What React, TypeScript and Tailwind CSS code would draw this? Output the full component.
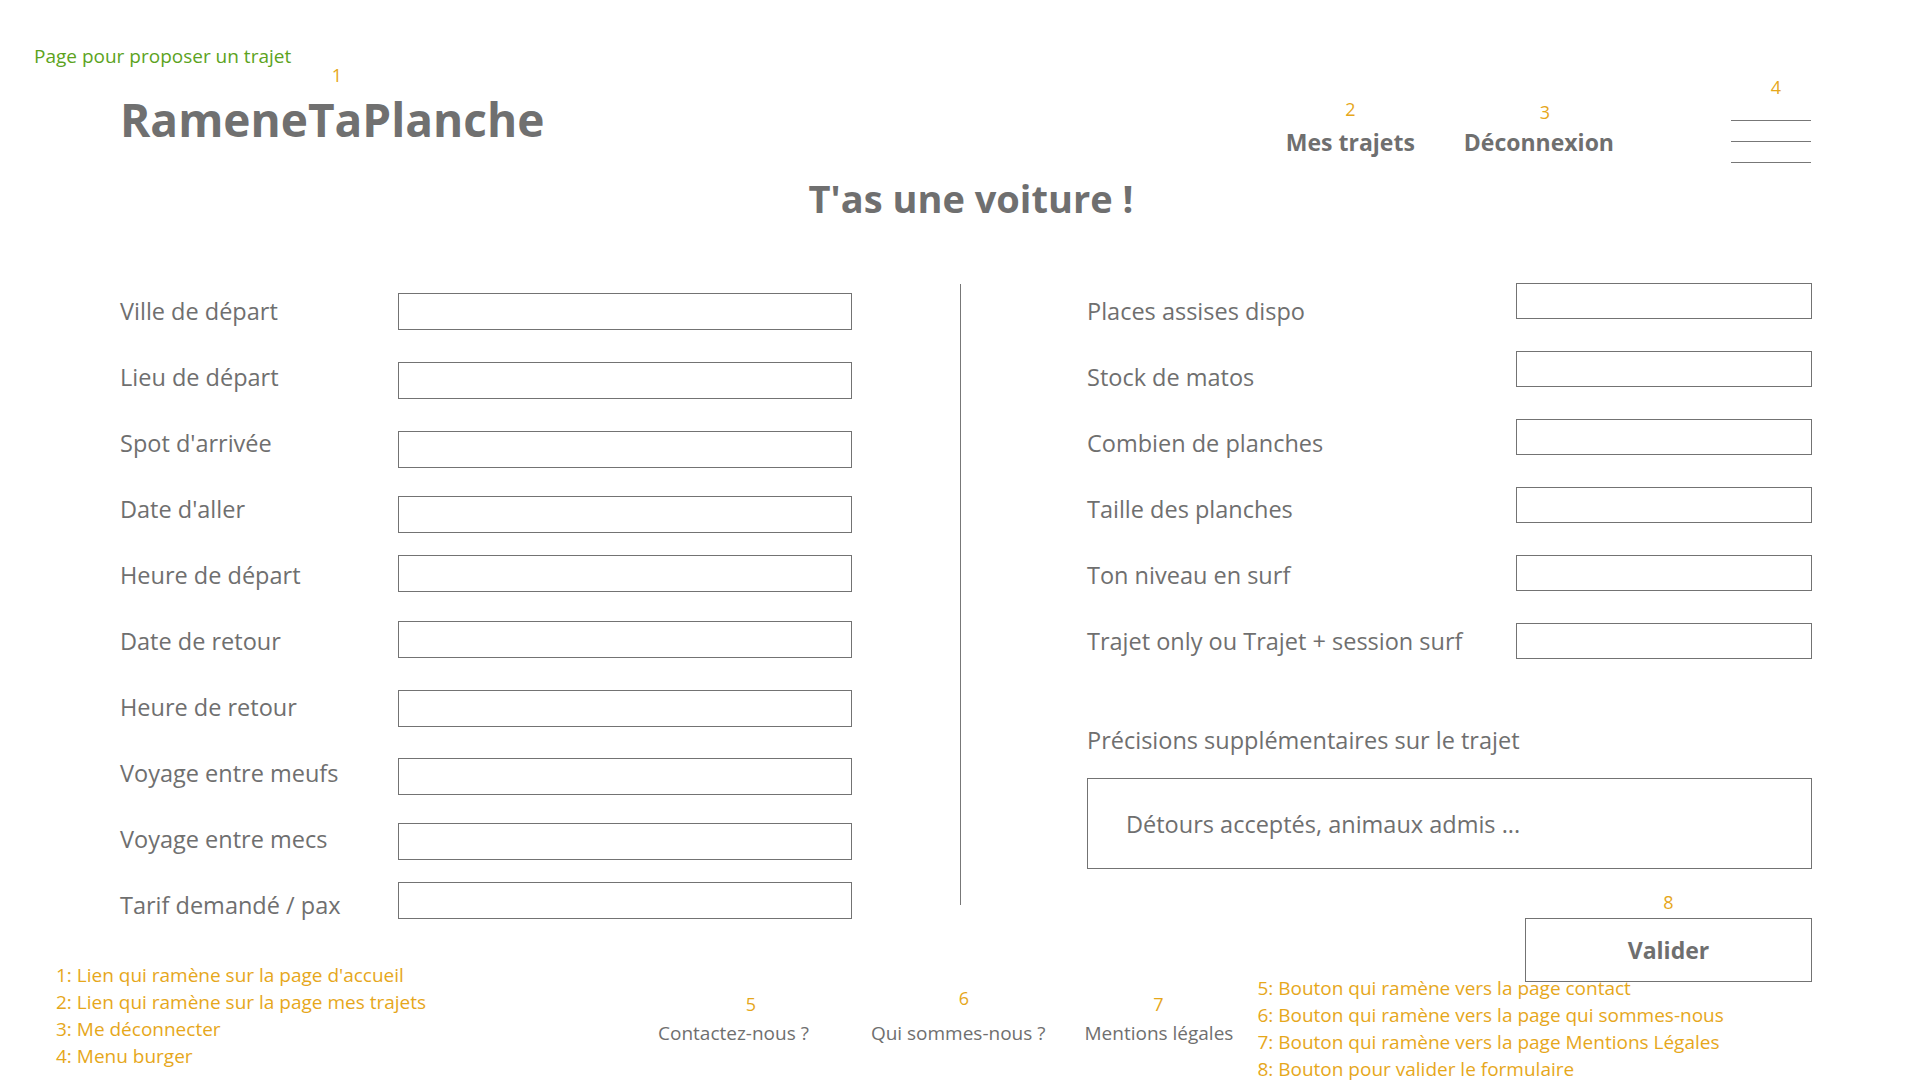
import React from "react";

const leftRows: { label: string; mt: string }[] = [
  { label: "Ville de départ", mt: "mt-[15px]" },
  { label: "Lieu de départ", mt: "mt-[18px]" },
  { label: "Spot d'arrivée", mt: "mt-[21px]" },
  { label: "Date d'aller", mt: "mt-[20px]" },
  { label: "Heure de départ", mt: "mt-[13px]" },
  { label: "Date de retour", mt: "mt-[13px]" },
  { label: "Heure de retour", mt: "mt-[16px]" },
  { label: "Voyage entre meufs", mt: "mt-[18px]" },
  { label: "Voyage entre mecs", mt: "mt-[17px]" },
  { label: "Tarif demandé / pax", mt: "mt-[10px]" },
];

const rightRows: { label: string; mt: string }[] = [
  { label: "Places assises dispo", mt: "mt-[5px]" },
  { label: "Stock de matos", mt: "mt-[7px]" },
  { label: "Combien de planches", mt: "mt-[9px]" },
  { label: "Taille des planches", mt: "mt-[11px]" },
  { label: "Ton niveau en surf", mt: "mt-[13px]" },
  { label: "Trajet only ou Trajet + session surf", mt: "mt-[15px]" },
];

const Num = ({ n, className }: { n: string; className: string }) => (
  <span
    className={
      "absolute w-[20px] text-center text-[18px] font-normal leading-[20px] text-[#e6a71b] " +
      className
    }
  >
    {n}
  </span>
);

export default function App() {
  return (
    <div className="relative flex h-[1080px] w-[1920px] flex-col overflow-hidden bg-white font-['Open_Sans',sans-serif] text-[#6f6f6f]">
      {/* annotation */}
      <p className="pl-[34px] pt-[44px] text-[19px] leading-[24px] text-[#5ca31d]">
        Page pour proposer un trajet
      </p>

      {/* header */}
      <header className="flex items-start pl-[120px] pr-[109px]">
        <div className="relative mt-[21px]">
          <Num n="1" className="left-[207px] top-[-24px]" />
          <h1 className="text-[46px] font-bold leading-[60px] text-[#707070]">
            RameneTaPlanche
          </h1>
        </div>
        <nav className="ml-auto flex items-start">
          <a className="relative mt-[59px] text-[23px] font-bold leading-[30px]">
            <Num n="2" className="left-1/2 top-[-28px] -translate-x-1/2" />
            Mes trajets
          </a>
          <a className="relative ml-[49px] mt-[59px] text-[23px] font-bold leading-[30px]">
            <Num n="3" className="left-[71px] top-[-25px]" />
            Déconnexion
          </a>
          <div className="relative ml-[117px] mt-[52px] flex w-[80px] flex-col gap-[20px]">
            <Num n="4" className="left-[35px] top-[-43px]" />
            <span className="h-px w-full bg-[#777777]" />
            <span className="h-px w-full bg-[#777777]" />
            <span className="h-px w-full bg-[#777777]" />
          </div>
        </nav>
      </header>

      {/* title */}
      <div className="mt-[12px] pl-[130px] pr-[108px] text-center">
        <h2 className="text-[38px] font-bold leading-[46px] text-[#6f6f6f]">
          T'as une voiture !
        </h2>
      </div>

      {/* form */}
      <section className="mt-[57px] flex items-start pl-[120px]">
        <div className="flex w-[732px] flex-col">
          {leftRows.map((r) => (
            <div key={r.label} className="flex h-[66px] items-center">
              <span className="w-[278px] text-[23.5px] leading-[32px]">
                {r.label}
              </span>
              <input
                type="text"
                className={
                  "h-[37px] w-[454px] self-start border border-[#737373] bg-transparent outline-none " +
                  r.mt
                }
              />
            </div>
          ))}
        </div>

        <div className="ml-[108px] mt-[6px] h-[621px] w-px bg-[#777777]" />

        <div className="ml-[126px] flex w-[725px] flex-col">
          {rightRows.map((r) => (
            <div key={r.label} className="flex h-[66px] items-center">
              <span className="w-[429px] text-[23.5px] leading-[32px]">
                {r.label}
              </span>
              <input
                type="text"
                className={
                  "h-[36px] w-[296px] self-start border border-[#737373] bg-transparent outline-none " +
                  r.mt
                }
              />
            </div>
          ))}
          <p className="mt-[50px] text-[23.5px] leading-[32px]">
            Précisions supplémentaires sur le trajet
          </p>
          <div className="mt-[22px] flex h-[91px] items-center border border-[#737373] pl-[38px] text-[23.5px] leading-[32px]">
            Détours acceptés, animaux admis ...
          </div>
          <button className="relative mt-[49px] flex h-[64px] w-[287px] items-center justify-center self-end border border-[#737373] text-[23px] font-bold leading-[30px] text-[#6f6f6f]">
            <Num n="8" className="left-1/2 top-[-27px] -translate-x-1/2" />
            Valider
          </button>
        </div>
      </section>

      {/* footer */}
      <footer className="-mt-[20px] flex items-start pl-[56px]">
        <ul className="w-[602px] text-[19px] leading-[27px] text-[#e6a71b]">
          <li>1: Lien qui ramène sur la page d'accueil</li>
          <li>2: Lien qui ramène sur la page mes trajets</li>
          <li>3: Me déconnecter</li>
          <li>4: Menu burger</li>
        </ul>
        <div className="mt-[32px] flex items-start text-[19px]">
          <a className="relative pt-[27px] leading-[24px]">
            <Num n="5" className="left-[83px] top-0" />
            Contactez-nous ?
          </a>
          <a className="relative ml-[62px] pt-[27px] leading-[24px]">
            <Num n="6" className="left-[83px] top-[-6px]" />
            Qui sommes-nous ?
          </a>
          <a className="relative ml-[39px] pt-[27px] leading-[24px]">
            <Num n="7" className="left-[64px] top-0" />
            Mentions légales
          </a>
        </div>
        <ul className="ml-[24px] mt-[13px] text-[19px] leading-[27px] text-[#e6a71b]">
          <li>5: Bouton qui ramène vers la page contact</li>
          <li>6: Bouton qui ramène vers la page qui sommes-nous</li>
          <li>7: Bouton qui ramène vers la page Mentions Légales</li>
          <li>8: Bouton pour valider le formulaire</li>
        </ul>
      </footer>
    </div>
  );
}
